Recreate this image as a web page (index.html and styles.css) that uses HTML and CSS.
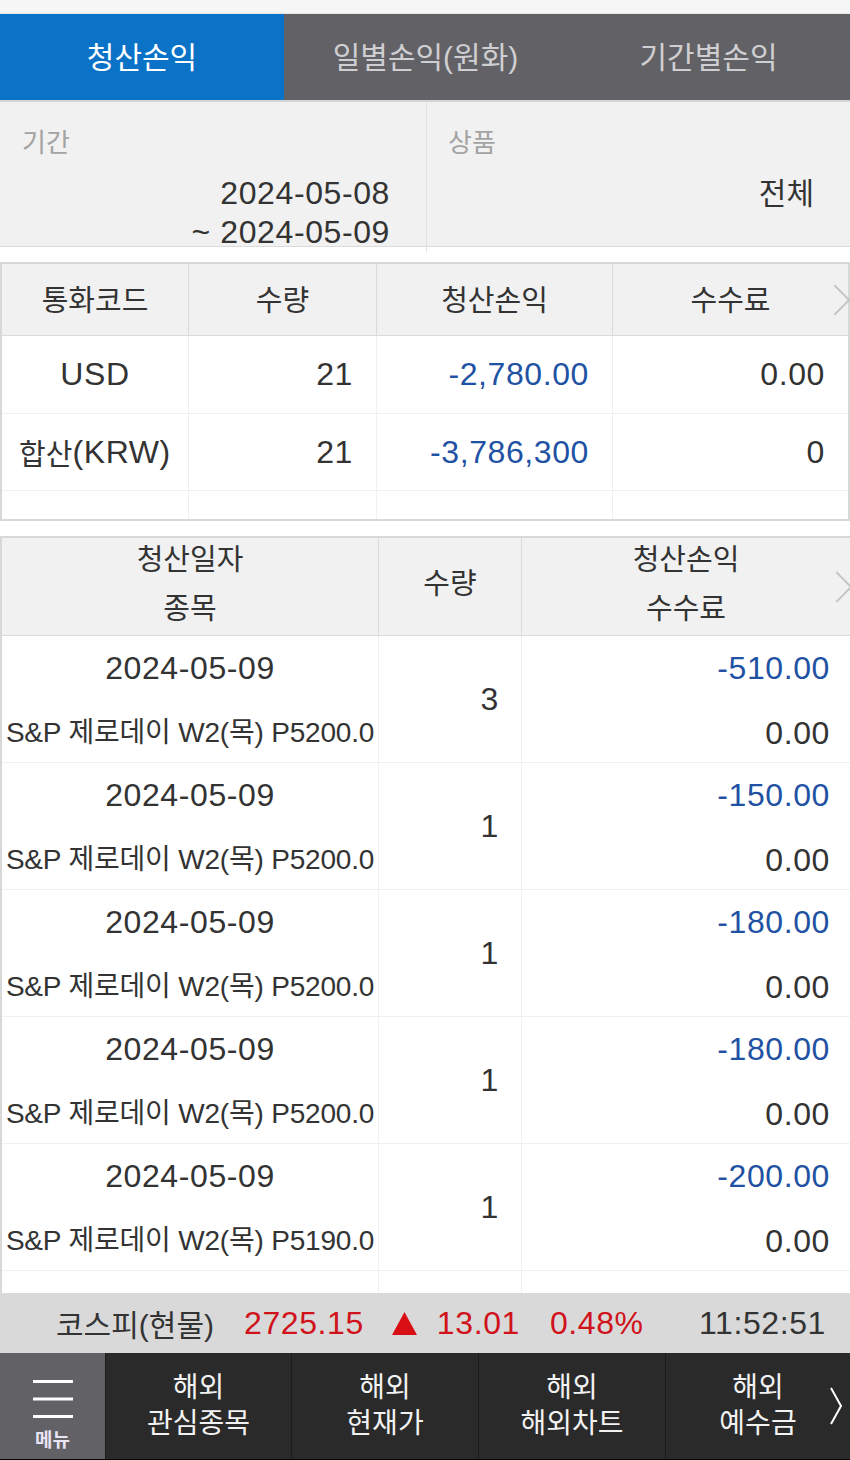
FILE: index.html
```html
<!DOCTYPE html>
<html lang="ko">
<head>
<meta charset="utf-8">
<title>청산손익</title>
<link rel="stylesheet" href="styles.css">
</head>
<body>
<div class="top-strip"></div>
<nav class="tabs">
  <div class="tab active">청산손익</div>
  <div class="tab">일별손익(원화)</div>
  <div class="tab">기간별손익</div>
</nav>
<section class="filter">
  <div class="fcol">
    <div class="flabel">기간</div>
    <div class="fval num">2024-05-08<br>~ 2024-05-09</div>
  </div>
  <div class="fcol">
    <div class="flabel">상품</div>
    <div class="fval">전체</div>
  </div>
</section>
<section class="summary">
  <div class="sh">통화코드</div>
  <div class="sh">수량</div>
  <div class="sh">청산손익</div>
  <div class="sh last">수수료<span class="chev"></span></div>

  <div class="sc center num">USD</div>
  <div class="sc right num">21</div>
  <div class="sc right num blue">-2,780.00</div>
  <div class="sc right num last">0.00</div>

  <div class="sc center num"><span class="ko">합산</span>(KRW)</div>
  <div class="sc right num">21</div>
  <div class="sc right num blue">-3,786,300</div>
  <div class="sc right num last">0</div>

  <div class="se"></div><div class="se"></div><div class="se"></div><div class="se last"></div>
</section>
<section class="detail">
  <div class="dh"><span>청산일자</span><span>종목</span></div>
  <div class="dh"><span>수량</span></div>
  <div class="dh last"><span>청산손익</span><span>수수료</span><span class="chev"></span></div>

  <div class="dc c1"><span class="num">2024-05-09</span><span class="name">S&amp;P 제로데이 W2(목) P5200.0</span></div>
  <div class="dc c2 num">3</div>
  <div class="dc c3 last"><span class="num blue">-510.00</span><span class="num">0.00</span></div>

  <div class="dc c1"><span class="num">2024-05-09</span><span class="name">S&amp;P 제로데이 W2(목) P5200.0</span></div>
  <div class="dc c2 num">1</div>
  <div class="dc c3 last"><span class="num blue">-150.00</span><span class="num">0.00</span></div>

  <div class="dc c1"><span class="num">2024-05-09</span><span class="name">S&amp;P 제로데이 W2(목) P5200.0</span></div>
  <div class="dc c2 num">1</div>
  <div class="dc c3 last"><span class="num blue">-180.00</span><span class="num">0.00</span></div>

  <div class="dc c1"><span class="num">2024-05-09</span><span class="name">S&amp;P 제로데이 W2(목) P5200.0</span></div>
  <div class="dc c2 num">1</div>
  <div class="dc c3 last"><span class="num blue">-180.00</span><span class="num">0.00</span></div>

  <div class="dc c1"><span class="num">2024-05-09</span><span class="name">S&amp;P 제로데이 W2(목) P5190.0</span></div>
  <div class="dc c2 num">1</div>
  <div class="dc c3 last"><span class="num blue">-200.00</span><span class="num">0.00</span></div>

  <div class="dp"></div><div class="dp"></div><div class="dp last"></div>
</section>
<div class="ticker">
  <span class="tk-name">코스피(현물)</span>
  <span class="tk-red num">2725.15</span>
  <svg class="tri" width="25" height="23" viewBox="0 0 25 23"><path d="M12.5 0 L25 23 L0 23 Z" fill="#d90f16"/></svg>
  <span class="tk-red num">13.01</span>
  <span class="tk-red num pct">0.48%</span>
  <span class="tk-time num">11:52:51</span>
</div>
<nav class="bottom">
  <div class="menu">
    <svg class="burger" width="40" height="40" viewBox="0 0 40 40"><path d="M0 1.5h40M0 19h40M0 36.5h40" stroke="#fff" stroke-width="3"/></svg>
    <span class="menu-label">메뉴</span>
  </div>
  <div class="bitem">해외<br>관심종목</div>
  <div class="bitem">해외<br>현재가</div>
  <div class="bitem">해외<br>해외차트</div>
  <div class="bitem">해외<br>예수금</div>
  <svg class="bnext" width="14" height="40" viewBox="0 0 14 40"><path d="M2 2 L12 20 L2 38" fill="none" stroke="#fff" stroke-width="2"/></svg>
</nav>
<div class="bottom-edge"></div>
</body>
</html>
```

FILE: styles.css
```css
* { box-sizing: border-box; }
html, body { margin: 0; padding: 0; }
body {
  width: 850px;
  height: 1460px;
  overflow: hidden;
  background: #fff;
  font-family: "Liberation Sans", "Noto Sans CJK KR", sans-serif;
  color: #333;
  font-size: 28px;
}
.num { font-size: 32px; letter-spacing: 0.6px; }
.ko { font-size: 29px; letter-spacing: 0; }
.blue { color: #1f52a3; }

.top-strip { height: 14px; background: #f6f6f6; border-bottom: 1px solid #e6e6e6; }

.tabs {
  display: grid;
  grid-template-columns: 284px 283px 1fr;
  height: 88px;
  background: #626166;
  border-bottom: 2px solid #d4d4d4;
}
.tab {
  display: flex;
  align-items: center;
  justify-content: center;
  color: #cfcfd2;
  font-size: 30px;
  padding-bottom: 4px;
}
.tab.active { background: #0a73c8; color: #fff; }

.filter {
  display: grid;
  grid-template-columns: 426px 1fr;
  height: 145px;
  background: #f1f1f1;
  border-bottom: 1px solid #dcdcdc;
}
.fcol { padding: 23px 36px 0 22px; display: flex; flex-direction: column; }
.fcol + .fcol { border-left: 1px solid #e2e2e2; padding-left: 21px; }
.flabel { color: #a3a3a3; font-size: 26px; line-height: 36px; }
.fval { text-align: right; line-height: 39px; margin-top: 13px; color: #333; }
.fcol + .fcol .fval { font-size: 30px; }

.summary {
  margin-top: 15px;
  display: grid;
  grid-template-columns: 187px 188px 236px 1fr;
  grid-template-rows: 72px 78px 77px 28px;
  border: 2px solid #d8d8d8;
}
.sh {
  display: flex; align-items: center; justify-content: center;
  background: #f1f1f1;
  border-right: 1px solid #dadada;
  border-bottom: 1px solid #dadada;
  position: relative;
  padding-bottom: 4px;
  font-size: 29px;
}
.sh.last, .sc.last, .se.last { border-right: none; }
.sc {
  display: flex; align-items: center;
  border-right: 1px solid #f0f0f0;
  border-bottom: 1px solid #f0f0f0;
  padding: 0 23px 0 0;
}
.sc.center { justify-content: center; padding: 0; }
.sc.right { justify-content: flex-end; }
.se { border-right: 1px solid #f0f0f0; }

.chev {
  position: absolute;
  right: 2px;
  top: 50%;
  width: 22px; height: 22px;
  margin-top: -11px;
  border-right: 2px solid #c4c4c4;
  border-top: 2px solid #c4c4c4;
  transform: rotate(45deg);
}

.detail {
  margin-top: 15px;
  display: grid;
  grid-template-columns: 377px 143px 1fr;
  grid-template-rows: 98px repeat(5, 127px) 22px;
  border: 2px solid #d8d8d8;
  border-bottom: none;
  border-right: none;
}
.dh {
  display: flex; flex-direction: column; align-items: center; justify-content: center;
  background: #f1f1f1;
  border-right: 1px solid #dadada;
  border-bottom: 1px solid #dadada;
  line-height: 49px;
  position: relative;
  padding-bottom: 4px;
  font-size: 29px;
}
.dh.last { border-right: none; }
.dc {
  border-right: 1px solid #f0f0f0;
  border-bottom: 1px solid #f0f0f0;
  display: flex;
}
.dc.last, .dp.last { border-right: none; }
.c1 { flex-direction: column; align-items: center; justify-content: space-between; padding: 13px 0 10px; overflow: hidden; }
.c1 .num { line-height: 38px; }
.name { font-size: 28px; letter-spacing: -0.2px; white-space: nowrap; line-height: 38px; }
.c2 { align-items: center; justify-content: flex-end; padding-right: 22px; }
.c3 { flex-direction: column; align-items: flex-end; justify-content: space-between; padding: 13px 20px 10px 0; }
.c3 .num { line-height: 38px; }
.dp { border-right: 1px solid #f0f0f0; }

.ticker {
  height: 60px;
  background: #d9d9d9;
  display: flex;
  align-items: center;
  padding: 0 24px 0 56px;
  color: #333;
}
.tk-name { font-size: 30px; margin-right: 30px; }
.tk-red { color: #d0121b; }
.tri { margin: 0 20px 0 28px; }
.pct { margin-left: 30px; }
.tk-time { margin-left: auto; }

.bottom {
  display: grid;
  grid-template-columns: 105px 186px 187px 187px 1fr;
  height: 106px;
  background: #2a2a2a;
  position: relative;
}
.menu {
  background: #626166;
  display: flex; flex-direction: column; align-items: center;
  padding-top: 27px;
}
.burger { display: block; }
.menu-label { font-size: 19px; color: #e8e4f4; margin-top: 9px; line-height: 24px; font-weight: bold; }
.bitem {
  display: flex; align-items: center; justify-content: center;
  text-align: center;
  color: #f2f2f2;
  font-size: 28px;
  line-height: 36px;
  border-left: 1px solid #1c1c1c;
}
.bnext { position: absolute; right: 7px; top: 33px; }
.bottom-edge { height: 4px; background: #050505; }
```
